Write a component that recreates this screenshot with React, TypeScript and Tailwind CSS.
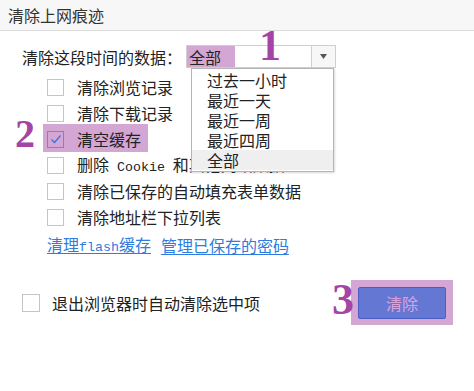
import React from 'react';

const font = { fontFamily: '"Noto Sans CJK SC", "Liberation Sans", sans-serif' };

const Box: React.FC<{ checked?: boolean; className?: string }> = ({ checked, className = '' }) => (
  <span className={`flex items-center justify-center border ${className}`}>
    {checked && (
      <svg width="12" height="10" viewBox="0 0 12 10" fill="none">
        <path d="M1.5 5.5 L4.5 8.5 L10.5 1.5" stroke="#3a6fe0" strokeWidth="1.2" />
      </svg>
    )}
  </span>
);

const Mono: React.FC<{ children: React.ReactNode }> = ({ children }) => (
  <span className="font-['Liberation_Mono',monospace] text-[13.3px] whitespace-pre">{children}</span>
);

const options = ['清除浏览记录', '清除下载记录', '清空缓存', 'cookie', '清除已保存的自动填充表单数据', '清除地址栏下拉列表'];

const App: React.FC = () => {
  return (
    <div className="relative w-[474px] h-[391px] bg-white text-[16px] leading-none text-[#222] overflow-hidden" style={font}>
      {/* title */}
      <div className="h-[31px] bg-[#f7f7f7] border-b border-[#dcdcdc] flex items-center px-[8px] text-[#333]">
        清除上网痕迹
      </div>

      <div className="pl-[22px]">
        <div className="mt-[14px] h-[23px] flex items-center">
          <span className="w-[164px]">清除这段时间的数据：</span>
          <div className="flex w-[150px] h-[23px] border border-[#cfcfcf] bg-white">
            <div className="flex-1 flex items-center">
              <span className="h-full w-[48px] bg-[#d3a6d3] flex items-center pl-[2px]">全部</span>
            </div>
            <div className="w-[24px] border-l border-[#cfcfcf] bg-[#f7f7f7] flex items-center justify-center">
              <svg width="7" height="5" viewBox="0 0 7 5"><path d="M0 0 H7 L3.5 5 Z" fill="#555" /></svg>
            </div>
          </div>
        </div>

        <div className="mt-[6px] pl-[25px]">
          {options.map((o, i) => (
            <div key={i} className="relative h-[26px] flex items-center gap-[13px]">
              {i === 2 && <div className="absolute left-[-4px] top-[-2px] w-[105px] h-[28px] bg-[#d3a6d3]" />}
              <Box checked={i === 2} className={`relative w-[17px] h-[17px] ${i === 2 ? 'border-[#9c7c9c]' : 'border-[#c4c4c4] bg-white'}`} />
              <span className="relative whitespace-nowrap">
                {o === 'cookie' ? (
                  <>删除<Mono> Cookie </Mono>和其他网站数据</>
                ) : o}
              </span>
            </div>
          ))}
          <div className="mt-[5px] h-[20px] flex items-center gap-[10px] text-[#2f7be0]">
            <a className="underline underline-offset-2">清理<Mono>flash</Mono>缓存</a>
            <a className="underline underline-offset-2">管理已保存的密码</a>
          </div>
        </div>

        <div className="mt-[32px] h-[32px] flex items-center pr-[28px]">
          <Box className="w-[18px] h-[18px] bg-white border-[#c4c4c4]" />
          <span className="ml-[12px]">退出浏览器时自动清除选中项</span>
          <div className="ml-auto relative">
            <div className="absolute left-[-7px] top-[-7px] w-[102px] h-[45px] bg-[#d3a6d3]" />
            <button className="relative w-[88px] h-[32px] bg-[#6477d3] border border-[#4a5fc4] rounded-[2px] text-[#dba3db] text-[16px]" style={font}>
              清除
            </button>
          </div>
        </div>
      </div>

      {/* dropdown list */}
      <div className="absolute left-[191px] top-[68px] w-[143px] py-[1px] bg-white border border-[#b5b5b5] shadow-[1px_1px_2px_rgba(0,0,0,0.15)]">
        {['过去一小时', '最近一天', '最近一周', '最近四周', '全部'].map((t, i) => (
          <div key={t} className={`h-[20px] flex items-center pl-[15px] ${i === 4 ? 'bg-[#efefef]' : ''}`}>{t}</div>
        ))}
      </div>

      {/* annotations */}
      <span className="absolute left-[259px] top-[24px] text-[44px] font-bold text-[#a444a4] font-['Liberation_Serif',serif]">1</span>
      <span className="absolute left-[15px] top-[114px] text-[40px] font-bold text-[#a444a4] font-['Liberation_Serif',serif]">2</span>
      <span className="absolute left-[332px] top-[278px] text-[44px] font-bold text-[#a444a4] font-['Liberation_Serif',serif]">3</span>
    </div>
  );
};

export default App;
